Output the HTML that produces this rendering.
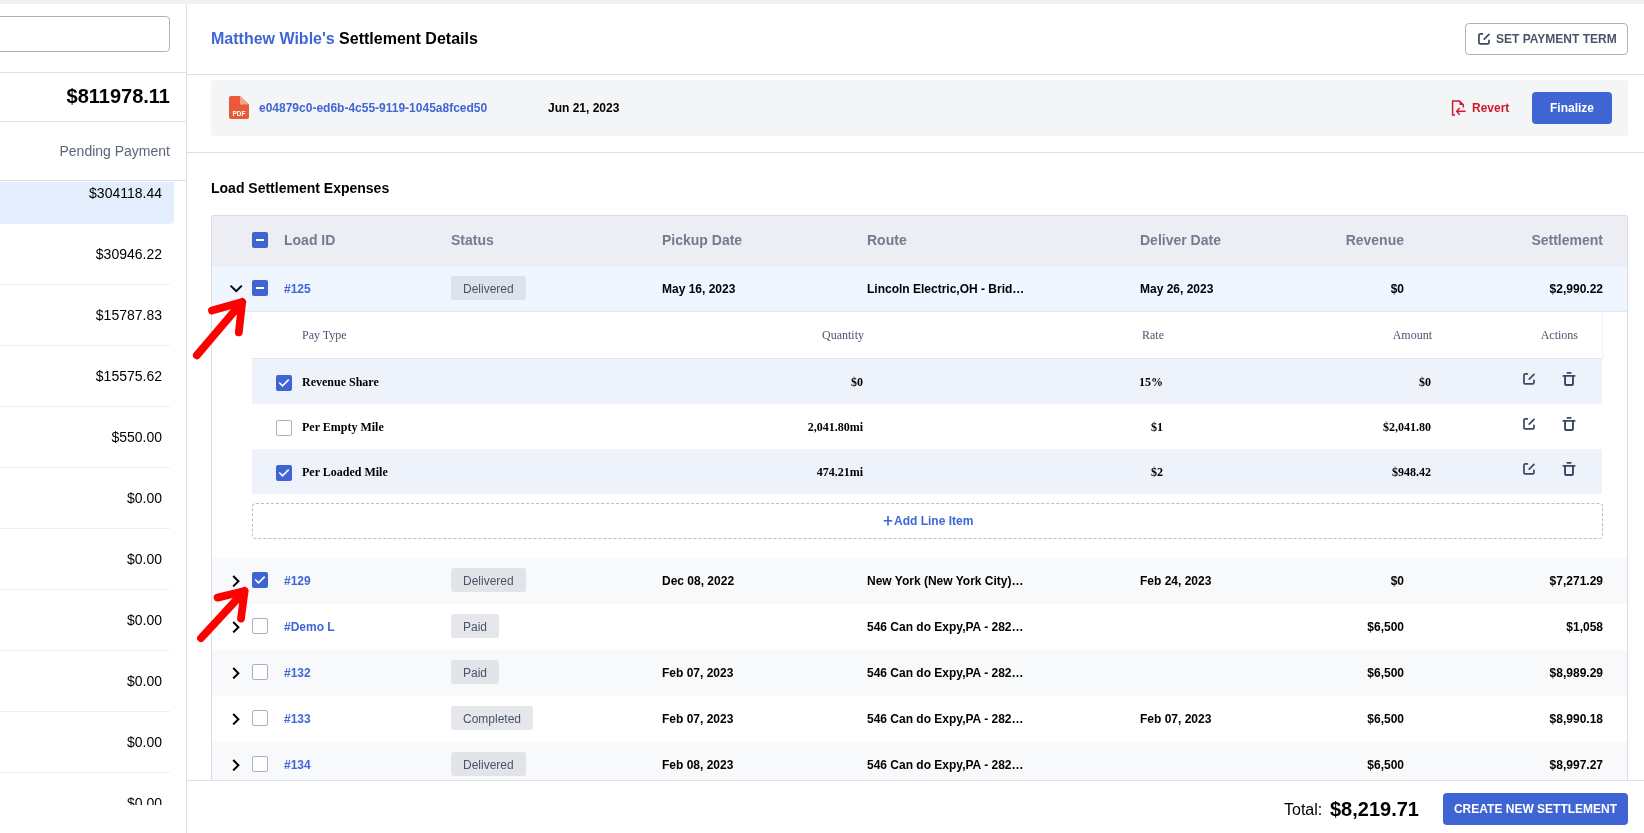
<!DOCTYPE html>
<html><head><meta charset="utf-8">
<style>
*{box-sizing:border-box;margin:0;padding:0}
html,body{width:1644px;height:833px;overflow:hidden;background:#fff;font-family:"Liberation Sans",sans-serif;color:#000}
body{will-change:transform}
.a{position:absolute}
.t{position:absolute;white-space:nowrap;line-height:20px;height:20px}
.b{font-weight:bold}
.f12{font-size:12px}
.f14{font-size:14px}
.r{text-align:right}
.hr{position:absolute;height:1px;background:#dcdfe6}
.cb{position:absolute;width:16px;height:16px;border-radius:2px}
.cb.on{background:#3f64d3}
.cb.off{background:#fff;border:1px solid #a9b0bf}
.badge{position:absolute;height:24px;line-height:26px;padding:0 12px;background:rgba(203,207,216,0.5);color:#4a5468;font-size:12px;border-radius:3px;white-space:nowrap}
.lk{color:#3f66d5}
.ser{font-family:"Liberation Serif",serif}
</style></head><body>

<div class="a" style="left:0;top:0;width:1644px;height:4px;background:#f0f1f5"></div>
<div class="a" style="left:186px;top:4px;width:1px;height:829px;background:#dcdfe6"></div>
<div class="a" style="left:-10px;top:16px;width:180px;height:36px;border:1px solid #a9b1c2;border-radius:4px"></div>
<div class="hr" style="left:0;top:72px;width:186px"></div>
<div class="t b r" style="left:0;width:170px;top:84px;font-size:20px;line-height:24px;height:24px">$811978.11</div>
<div class="hr" style="left:0;top:121px;width:186px"></div>
<div class="t f14 r" style="left:0;width:170px;top:141px;color:#5b6478">Pending Payment</div>
<div class="hr" style="left:0;top:180px;width:186px"></div>
<div class="a" style="left:0;top:181px;width:186px;height:624px;overflow:hidden">
<div class="a" style="left:0;top:1px;width:174px;height:42px;background:#e4edfb;border-radius:0 0 4px 0"></div>
<div class="t f14 r" style="left:0;width:162px;top:2px">$304118.44</div>
<div class="a" style="left:0;top:103px;width:170px;height:1px;background:#eef0f3"></div>
<div class="t f14 r" style="left:0;width:162px;top:63px">$30946.22</div>
<div class="a" style="left:0;top:164px;width:170px;height:1px;background:#eef0f3"></div>
<div class="t f14 r" style="left:0;width:162px;top:124px">$15787.83</div>
<div class="a" style="left:0;top:225px;width:170px;height:1px;background:#eef0f3"></div>
<div class="t f14 r" style="left:0;width:162px;top:185px">$15575.62</div>
<div class="a" style="left:0;top:286px;width:170px;height:1px;background:#eef0f3"></div>
<div class="t f14 r" style="left:0;width:162px;top:246px">$550.00</div>
<div class="a" style="left:0;top:347px;width:170px;height:1px;background:#eef0f3"></div>
<div class="t f14 r" style="left:0;width:162px;top:307px">$0.00</div>
<div class="a" style="left:0;top:408px;width:170px;height:1px;background:#eef0f3"></div>
<div class="t f14 r" style="left:0;width:162px;top:368px">$0.00</div>
<div class="a" style="left:0;top:469px;width:170px;height:1px;background:#eef0f3"></div>
<div class="t f14 r" style="left:0;width:162px;top:429px">$0.00</div>
<div class="a" style="left:0;top:530px;width:170px;height:1px;background:#eef0f3"></div>
<div class="t f14 r" style="left:0;width:162px;top:490px">$0.00</div>
<div class="a" style="left:0;top:591px;width:170px;height:1px;background:#eef0f3"></div>
<div class="t f14 r" style="left:0;width:162px;top:551px">$0.00</div>
<div class="a" style="left:0;top:652px;width:170px;height:1px;background:#eef0f3"></div>
<div class="t f14 r" style="left:0;width:162px;top:612px">$0.00</div>
</div>
<div class="t b" style="left:211px;top:29px;font-size:16px"><span class="lk">Matthew Wible's</span> Settlement Details</div>
<div class="a" style="left:1465px;top:23px;width:163px;height:32px;border:1px solid #a9b1c2;border-radius:4px"></div>
<svg class="a" style="left:1477px;top:32px" width="14" height="14" viewBox="0 0 14 14"><path d="M5.35 1.95 H3.2 Q1.95 1.95 1.95 3.2 V10.7 Q1.95 11.95 3.2 11.95 H10.7 Q11.95 11.95 11.95 10.7 V8.35" fill="none" stroke="#3d4760" stroke-width="1.7" stroke-linecap="round" stroke-linejoin="round"/><path d="M7.2 7.1 L12.0 2.3" fill="none" stroke="#3d4760" stroke-width="1.7" stroke-linecap="round"/></svg>
<div class="t b f12" style="left:1496px;top:29px;color:#4a5468">SET PAYMENT TERM</div>
<div class="hr" style="left:187px;top:74px;width:1457px"></div>
<div class="a" style="left:211px;top:80px;width:1417px;height:56px;background:#f4f5f7;border-radius:4px"></div>
<svg class="a" style="left:229px;top:96px" width="20" height="23" viewBox="0 0 20 23"><path d="M2 0 H11 L20 8.5 V21 Q20 23 18 23 H2 Q0 23 0 21 V2 Q0 0 2 0 Z" fill="#ea5a3a"/><path d="M11 0 L20 8.5 H11 Z" fill="#f3a593"/><text x="10" y="20" text-anchor="middle" font-family="Liberation Sans" font-weight="bold" font-size="6.5" fill="#fff">PDF</text></svg>
<div class="t b f12 lk" style="left:259px;top:98px">e04879c0-ed6b-4c55-9119-1045a8fced50</div>
<div class="t b f12" style="left:548px;top:98px">Jun 21, 2023</div>
<svg class="a" style="left:1450px;top:99px" width="18" height="18" viewBox="0 0 18 18"><path d="M5 16 H2.6 V2 H9.5 L13.3 5.9 V8.5" fill="none" stroke="#d01a2a" stroke-width="1.5"/><path d="M9.5 2 V5.9 H13.3 Z" fill="#d01a2a"/><path d="M15.6 12.3 H7" fill="none" stroke="#d01a2a" stroke-width="1.5"/><path d="M9.6 9 L6.7 12.3 L9.6 15.8" fill="none" stroke="#d01a2a" stroke-width="1.5"/></svg>
<div class="t b f12" style="left:1472px;top:98px;color:#d01a2a">Revert</div>
<div class="a" style="left:1532px;top:92px;width:80px;height:32px;background:#3f64d3;border-radius:4px"></div>
<div class="t b f12" style="left:1532px;width:80px;text-align:center;top:98px;color:#fff">Finalize</div>
<div class="hr" style="left:187px;top:152px;width:1457px"></div>
<div class="t b f14" style="left:211px;top:178px">Load Settlement Expenses</div>
<div class="a" style="left:211px;top:215px;width:1417px;height:565px;border:1px solid #d8dce3;border-bottom:none;background:#fff;border-radius:3px 3px 0 0"></div>
<div class="a" style="left:212px;top:216px;width:1415px;height:50px;background:#edeef3;border-radius:2px 2px 0 0"></div>
<div class="cb on" style="left:252px;top:232px"><div class="a" style="left:4px;top:7px;width:8px;height:2px;background:#fff"></div></div>
<div class="t b f14" style="left:284px;top:230px;color:#737b8e">Load ID</div>
<div class="t b f14" style="left:451px;top:230px;color:#737b8e">Status</div>
<div class="t b f14" style="left:662px;top:230px;color:#737b8e">Pickup Date</div>
<div class="t b f14" style="left:867px;top:230px;color:#737b8e">Route</div>
<div class="t b f14" style="left:1140px;top:230px;color:#737b8e">Deliver Date</div>
<div class="t b f14 r" style="left:1204px;width:200px;top:230px;color:#737b8e">Revenue</div>
<div class="t b f14 r" style="left:1403px;width:200px;top:230px;color:#737b8e">Settlement</div>
<div class="a" style="left:212px;top:266px;width:1415px;height:45px;background:#eff6ff"></div>
<svg class="a" style="left:229px;top:283px" width="14" height="10" viewBox="0 0 14 10"><path d="M1.6 2.6 L7.2 8.2 L12.8 2.6" fill="none" stroke="#000" stroke-width="2"/></svg>
<div class="cb on" style="left:252px;top:280px"><div class="a" style="left:4px;top:7px;width:8px;height:2px;background:#fff"></div></div>
<div class="t b f12 lk" style="left:284px;top:279px">#125</div>
<div class="badge" style="left:451px;top:276px">Delivered</div>
<div class="t b f12" style="left:662px;top:279px">May 16, 2023</div>
<div class="t b f12" style="left:867px;top:279px">Lincoln Electric,OH - Brid…</div>
<div class="t b f12" style="left:1140px;top:279px">May 26, 2023</div>
<div class="t b f12 r" style="left:1204px;width:200px;top:279px">$0</div>
<div class="t b f12 r" style="left:1403px;width:200px;top:279px">$2,990.22</div>
<div class="a" style="left:212px;top:311px;width:1415px;height:1px;background:#e3e8f0"></div>
<div class="a" style="left:252px;top:312px;width:1351px;height:47px;border-right:1px solid #f2f3f6;border-bottom:1px solid #e3e7ef"></div>
<div class="t f12 ser" style="left:302px;top:325px;color:#4a5670">Pay Type</div>
<div class="t f12 ser r" style="left:664px;width:200px;top:325px;color:#4a5670">Quantity</div>
<div class="t f12 ser r" style="left:964px;width:200px;top:325px;color:#4a5670">Rate</div>
<div class="t f12 ser r" style="left:1232px;width:200px;top:325px;color:#4a5670">Amount</div>
<div class="t f12 ser r" style="left:1378px;width:200px;top:325px;color:#4a5670">Actions</div>
<div class="a" style="left:252px;top:359px;width:1350px;height:45px;background:#eef2fa"></div>
<div class="cb on" style="left:276px;top:375px"><svg width="16" height="16" viewBox="0 0 16 16" style="position:absolute;left:0;top:0"><path d="M3.2 7.5 L6.5 10.8 L12.7 4.6" fill="none" stroke="#fff" stroke-width="1.6"/></svg></div>
<div class="t b f12 ser" style="left:302px;top:372px">Revenue Share</div>
<div class="t b f12 ser r" style="left:663px;width:200px;top:372px">$0</div>
<div class="t b f12 ser r" style="left:963px;width:200px;top:372px">15%</div>
<div class="t b f12 ser r" style="left:1231px;width:200px;top:372px">$0</div>
<svg class="a" style="left:1522px;top:372px" width="14" height="14" viewBox="0 0 14 14"><path d="M5.35 1.95 H3.2 Q1.95 1.95 1.95 3.2 V10.7 Q1.95 11.95 3.2 11.95 H10.7 Q11.95 11.95 11.95 10.7 V8.35" fill="none" stroke="#3d4760" stroke-width="1.7" stroke-linecap="round" stroke-linejoin="round"/><path d="M7.2 7.1 L12.0 2.3" fill="none" stroke="#3d4760" stroke-width="1.7" stroke-linecap="round"/></svg>
<svg class="a" style="left:1561px;top:371px" width="16" height="16" viewBox="0 0 16 16"><path d="M6.35 1.85 H9.75 M2.35 4.95 H13.65" stroke="#3d4760" stroke-width="1.8" stroke-linecap="round"/><path d="M4.05 4.95 V13 Q4.05 13.95 5 13.95 H11 Q11.95 13.95 11.95 13 V4.95" fill="none" stroke="#3d4760" stroke-width="1.9"/></svg>
<div class="cb off" style="left:276px;top:420px"></div>
<div class="t b f12 ser" style="left:302px;top:417px">Per Empty Mile</div>
<div class="t b f12 ser r" style="left:663px;width:200px;top:417px">2,041.80mi</div>
<div class="t b f12 ser r" style="left:963px;width:200px;top:417px">$1</div>
<div class="t b f12 ser r" style="left:1231px;width:200px;top:417px">$2,041.80</div>
<svg class="a" style="left:1522px;top:417px" width="14" height="14" viewBox="0 0 14 14"><path d="M5.35 1.95 H3.2 Q1.95 1.95 1.95 3.2 V10.7 Q1.95 11.95 3.2 11.95 H10.7 Q11.95 11.95 11.95 10.7 V8.35" fill="none" stroke="#3d4760" stroke-width="1.7" stroke-linecap="round" stroke-linejoin="round"/><path d="M7.2 7.1 L12.0 2.3" fill="none" stroke="#3d4760" stroke-width="1.7" stroke-linecap="round"/></svg>
<svg class="a" style="left:1561px;top:416px" width="16" height="16" viewBox="0 0 16 16"><path d="M6.35 1.85 H9.75 M2.35 4.95 H13.65" stroke="#3d4760" stroke-width="1.8" stroke-linecap="round"/><path d="M4.05 4.95 V13 Q4.05 13.95 5 13.95 H11 Q11.95 13.95 11.95 13 V4.95" fill="none" stroke="#3d4760" stroke-width="1.9"/></svg>
<div class="a" style="left:252px;top:449px;width:1350px;height:45px;background:#eef2fa"></div>
<div class="cb on" style="left:276px;top:465px"><svg width="16" height="16" viewBox="0 0 16 16" style="position:absolute;left:0;top:0"><path d="M3.2 7.5 L6.5 10.8 L12.7 4.6" fill="none" stroke="#fff" stroke-width="1.6"/></svg></div>
<div class="t b f12 ser" style="left:302px;top:462px">Per Loaded Mile</div>
<div class="t b f12 ser r" style="left:663px;width:200px;top:462px">474.21mi</div>
<div class="t b f12 ser r" style="left:963px;width:200px;top:462px">$2</div>
<div class="t b f12 ser r" style="left:1231px;width:200px;top:462px">$948.42</div>
<svg class="a" style="left:1522px;top:462px" width="14" height="14" viewBox="0 0 14 14"><path d="M5.35 1.95 H3.2 Q1.95 1.95 1.95 3.2 V10.7 Q1.95 11.95 3.2 11.95 H10.7 Q11.95 11.95 11.95 10.7 V8.35" fill="none" stroke="#3d4760" stroke-width="1.7" stroke-linecap="round" stroke-linejoin="round"/><path d="M7.2 7.1 L12.0 2.3" fill="none" stroke="#3d4760" stroke-width="1.7" stroke-linecap="round"/></svg>
<svg class="a" style="left:1561px;top:461px" width="16" height="16" viewBox="0 0 16 16"><path d="M6.35 1.85 H9.75 M2.35 4.95 H13.65" stroke="#3d4760" stroke-width="1.8" stroke-linecap="round"/><path d="M4.05 4.95 V13 Q4.05 13.95 5 13.95 H11 Q11.95 13.95 11.95 13 V4.95" fill="none" stroke="#3d4760" stroke-width="1.9"/></svg>
<div class="a" style="left:252px;top:503px;width:1351px;height:36px;border:1px dashed #b9bfca;border-radius:4px"></div>
<svg class="a" style="left:883px;top:515px" width="10" height="11" viewBox="0 0 10 11"><path d="M5 1 V10.4 M0.7 5.7 H9.3" stroke="#3b63d6" stroke-width="1.6"/></svg>
<div class="t b f12 lk" style="left:894px;top:511px">Add Line Item</div>
<div class="a" style="left:212px;top:558px;width:1415px;height:46px;background:#f8f9fb"></div>
<svg class="a" style="left:232px;top:573px" width="10" height="14" viewBox="0 0 10 14"><path d="M1.2 3 L6.4 8.2 L1.2 13.4" fill="none" stroke="#000" stroke-width="2"/></svg>
<div class="cb on" style="left:252px;top:572px"><svg width="16" height="16" viewBox="0 0 16 16" style="position:absolute;left:0;top:0"><path d="M3.2 7.5 L6.5 10.8 L12.7 4.6" fill="none" stroke="#fff" stroke-width="1.6"/></svg></div>
<div class="t b f12 lk" style="left:284px;top:571px">#129</div>
<div class="badge" style="left:451px;top:568px">Delivered</div>
<div class="t b f12" style="left:662px;top:571px">Dec 08, 2022</div>
<div class="t b f12" style="left:867px;top:571px">New York (New York City)…</div>
<div class="t b f12" style="left:1140px;top:571px">Feb 24, 2023</div>
<div class="t b f12 r" style="left:1204px;width:200px;top:571px">$0</div>
<div class="t b f12 r" style="left:1403px;width:200px;top:571px">$7,271.29</div>
<svg class="a" style="left:232px;top:619px" width="10" height="14" viewBox="0 0 10 14"><path d="M1.2 3 L6.4 8.2 L1.2 13.4" fill="none" stroke="#000" stroke-width="2"/></svg>
<div class="cb off" style="left:252px;top:618px"></div>
<div class="t b f12 lk" style="left:284px;top:617px">#Demo L</div>
<div class="badge" style="left:451px;top:614px">Paid</div>
<div class="t b f12" style="left:662px;top:617px"></div>
<div class="t b f12" style="left:867px;top:617px">546 Can do Expy,PA - 282…</div>
<div class="t b f12" style="left:1140px;top:617px"></div>
<div class="t b f12 r" style="left:1204px;width:200px;top:617px">$6,500</div>
<div class="t b f12 r" style="left:1403px;width:200px;top:617px">$1,058</div>
<div class="a" style="left:212px;top:650px;width:1415px;height:46px;background:#f8f9fb"></div>
<svg class="a" style="left:232px;top:665px" width="10" height="14" viewBox="0 0 10 14"><path d="M1.2 3 L6.4 8.2 L1.2 13.4" fill="none" stroke="#000" stroke-width="2"/></svg>
<div class="cb off" style="left:252px;top:664px"></div>
<div class="t b f12 lk" style="left:284px;top:663px">#132</div>
<div class="badge" style="left:451px;top:660px">Paid</div>
<div class="t b f12" style="left:662px;top:663px">Feb 07, 2023</div>
<div class="t b f12" style="left:867px;top:663px">546 Can do Expy,PA - 282…</div>
<div class="t b f12" style="left:1140px;top:663px"></div>
<div class="t b f12 r" style="left:1204px;width:200px;top:663px">$6,500</div>
<div class="t b f12 r" style="left:1403px;width:200px;top:663px">$8,989.29</div>
<svg class="a" style="left:232px;top:711px" width="10" height="14" viewBox="0 0 10 14"><path d="M1.2 3 L6.4 8.2 L1.2 13.4" fill="none" stroke="#000" stroke-width="2"/></svg>
<div class="cb off" style="left:252px;top:710px"></div>
<div class="t b f12 lk" style="left:284px;top:709px">#133</div>
<div class="badge" style="left:451px;top:706px">Completed</div>
<div class="t b f12" style="left:662px;top:709px">Feb 07, 2023</div>
<div class="t b f12" style="left:867px;top:709px">546 Can do Expy,PA - 282…</div>
<div class="t b f12" style="left:1140px;top:709px">Feb 07, 2023</div>
<div class="t b f12 r" style="left:1204px;width:200px;top:709px">$6,500</div>
<div class="t b f12 r" style="left:1403px;width:200px;top:709px">$8,990.18</div>
<div class="a" style="left:212px;top:742px;width:1415px;height:46px;background:#f8f9fb"></div>
<svg class="a" style="left:232px;top:757px" width="10" height="14" viewBox="0 0 10 14"><path d="M1.2 3 L6.4 8.2 L1.2 13.4" fill="none" stroke="#000" stroke-width="2"/></svg>
<div class="cb off" style="left:252px;top:756px"></div>
<div class="t b f12 lk" style="left:284px;top:755px">#134</div>
<div class="badge" style="left:451px;top:752px">Delivered</div>
<div class="t b f12" style="left:662px;top:755px">Feb 08, 2023</div>
<div class="t b f12" style="left:867px;top:755px">546 Can do Expy,PA - 282…</div>
<div class="t b f12" style="left:1140px;top:755px"></div>
<div class="t b f12 r" style="left:1204px;width:200px;top:755px">$6,500</div>
<div class="t b f12 r" style="left:1403px;width:200px;top:755px">$8,997.27</div>
<div class="a" style="left:187px;top:780px;width:1457px;height:53px;background:#fff"></div>
<div class="hr" style="left:187px;top:780px;width:1457px"></div>
<div class="t" style="left:1284px;top:800px;font-size:16px">Total:</div>
<div class="t b" style="left:1330px;top:797px;font-size:20px;line-height:24px;height:24px">$8,219.71</div>
<div class="a" style="left:1443px;top:793px;width:185px;height:32px;background:#3f64d3;border-radius:4px"></div>
<div class="t b f12" style="left:1443px;width:185px;text-align:center;top:799px;color:#fff">CREATE NEW SETTLEMENT</div>
<svg class="a" style="left:0;top:0" width="1644" height="833" viewBox="0 0 1644 833">
<path d="M196.8 355.4 L242.2 302 M212 310.6 L242.2 302 L238.8 332.4" fill="none" stroke="#fe0000" stroke-width="7.8" stroke-linecap="round" stroke-linejoin="round"/>
<path d="M201 638.2 L244.6 591 M217.6 597.6 L244.6 591 L241 618.6" fill="none" stroke="#fe0000" stroke-width="7.8" stroke-linecap="round" stroke-linejoin="round"/>
</svg>
</body></html>
